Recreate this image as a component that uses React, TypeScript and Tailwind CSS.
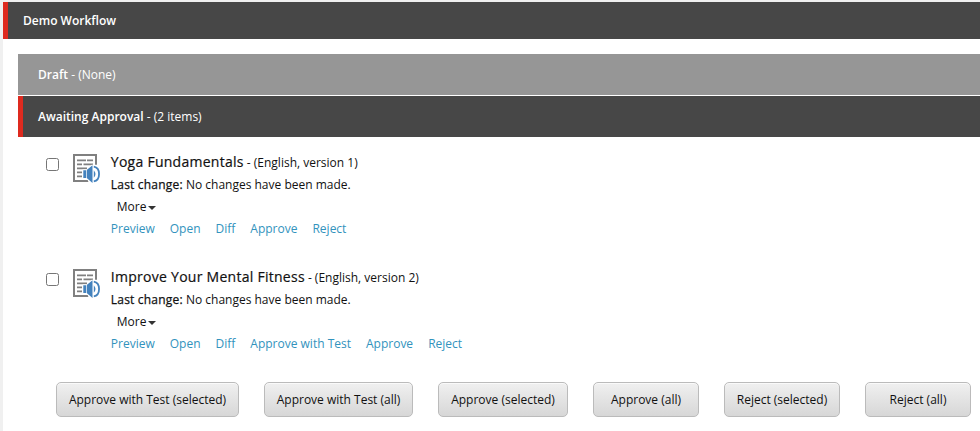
type Item = { title: string; details: string; actions: string[] };

const items: Item[] = [
  { title: 'Yoga Fundamentals', details: '(English, version 1)', actions: ['Preview', 'Open', 'Diff', 'Approve', 'Reject'] },
  {
    title: 'Improve Your Mental Fitness',
    details: '(English, version 2)',
    actions: ['Preview', 'Open', 'Diff', 'Approve with Test', 'Approve', 'Reject'],
  },
];

const buttons = [
  { label: 'Approve with Test (selected)', width: 'w-[183px]' },
  { label: 'Approve with Test (all)', width: 'w-[149px]' },
  { label: 'Approve (selected)', width: 'w-[130px]' },
  { label: 'Approve (all)', width: 'w-[106px]' },
  { label: 'Reject (selected)', width: 'w-[116px]' },
  { label: 'Reject (all)', width: 'w-[106px]' },
];

function DocumentAudioIcon() {
  return (
    <svg width="28" height="30" viewBox="0 0 28 30" className="block shrink-0">
      <rect x="1" y="1" width="22" height="26" fill="#fff" stroke="#808080" strokeWidth="2" />
      <path
        d="M4 6.4h9M14 6.4h6M4 10.4h5M10.5 10.4h9.5M4 14.4h10M4 18.4h5M4 22.4h5"
        stroke="#808080"
        strokeWidth="1.6"
        fill="none"
      />
      <path d="M9.5 15.5h4.2l5-4.7h9v18.7H16l-1.5-4H9.5z" fill="#fff" />
      <path d="M10.3 16.2h3v7.8h-3zM14 15.8l5.5-4.6v17.8L14 24.2z" fill="#4482bd" />
      <path d="M20.8 16.2q3.4 3.8 0 7.6z" fill="#4482bd" />
      <path d="M20.8 12.6c7 1.2 7 13.6 0 14.8" stroke="#4482bd" strokeWidth="1.8" fill="none" />
    </svg>
  );
}

function WorkflowItem({ item }: { item: Item }) {
  return (
    <div className="flex h-[115px] pl-[43px]">
      <input
        type="checkbox"
        aria-label={item.title}
        className="mt-[6px] block size-[13px] shrink-0 appearance-none rounded-[2.5px] border border-[#767676] bg-white"
      />
      <div className="ml-[14px] mt-[2px] w-[37.8px] shrink-0">
        <DocumentAudioIcon />
      </div>
      <div className="whitespace-nowrap">
        <div className="flex h-[22px] items-baseline leading-[20px]">
          <span className="text-[14px] tracking-[0.27px] [-webkit-text-stroke:0.2px_#111]">{item.title}</span>
          <span className="ml-[3px]">- {item.details}</span>
        </div>
        <div className="h-[22px] leading-[22px]">
          <span className="tracking-[0.2px] [-webkit-text-stroke:0.25px_#111]">Last change:</span> No changes have been made.
        </div>
        <div className="flex h-[22px] items-center pl-[6px]">
          More
          <span className="ml-[2px] mt-[2px] border-x-[4px] border-t-[4px] border-x-transparent border-t-[#333]" />
        </div>
        <div className="flex gap-[15px] leading-[22px] text-[#3293bd]">
          {item.actions.map((action) => (
            <a key={action}>{action}</a>
          ))}
        </div>
      </div>
    </div>
  );
}

export default function App() {
  return (
    <div className="h-[431px] w-[980px] overflow-hidden bg-[#f0f0f0] pl-[3px] pt-[2px] font-['Open_Sans',sans-serif] text-[12px] text-[#111]">
      <main className="h-full bg-white">
        <header className="flex h-[37px] items-center border-l-[5px] border-[#de2a1f] bg-[#474747] pl-[15px] font-semibold text-white">
          Demo Workflow
        </header>
        <section className="ml-[15px] mt-[15px] text-white">
          <div className="flex h-[41px] items-center bg-[#969696] pl-[20px] whitespace-pre">
            <span className="font-semibold">Draft</span> - (None)
          </div>
          <div className="mt-px flex h-[41px] items-center border-l-[5px] border-[#de2a1f] bg-[#474747] pl-[15px] whitespace-pre">
            <span className="font-semibold">Awaiting Approval</span> - (2 items)
          </div>
        </section>
        <div className="pt-[15px]">
          {items.map((item) => (
            <WorkflowItem key={item.title} item={item} />
          ))}
        </div>
        <div className="flex gap-[25px] pl-[53px]">
          {buttons.map(({ label, width }) => (
            <button
              key={label}
              className={`h-[35px] shrink-0 whitespace-nowrap rounded-[5px] border border-[#bbb] bg-linear-to-b from-[#f0f0f0] to-[#d7d7d7] shadow-[inset_0_1px_0_#fafafa] ${width}`}
            >
              {label}
            </button>
          ))}
        </div>
      </main>
    </div>
  );
}
